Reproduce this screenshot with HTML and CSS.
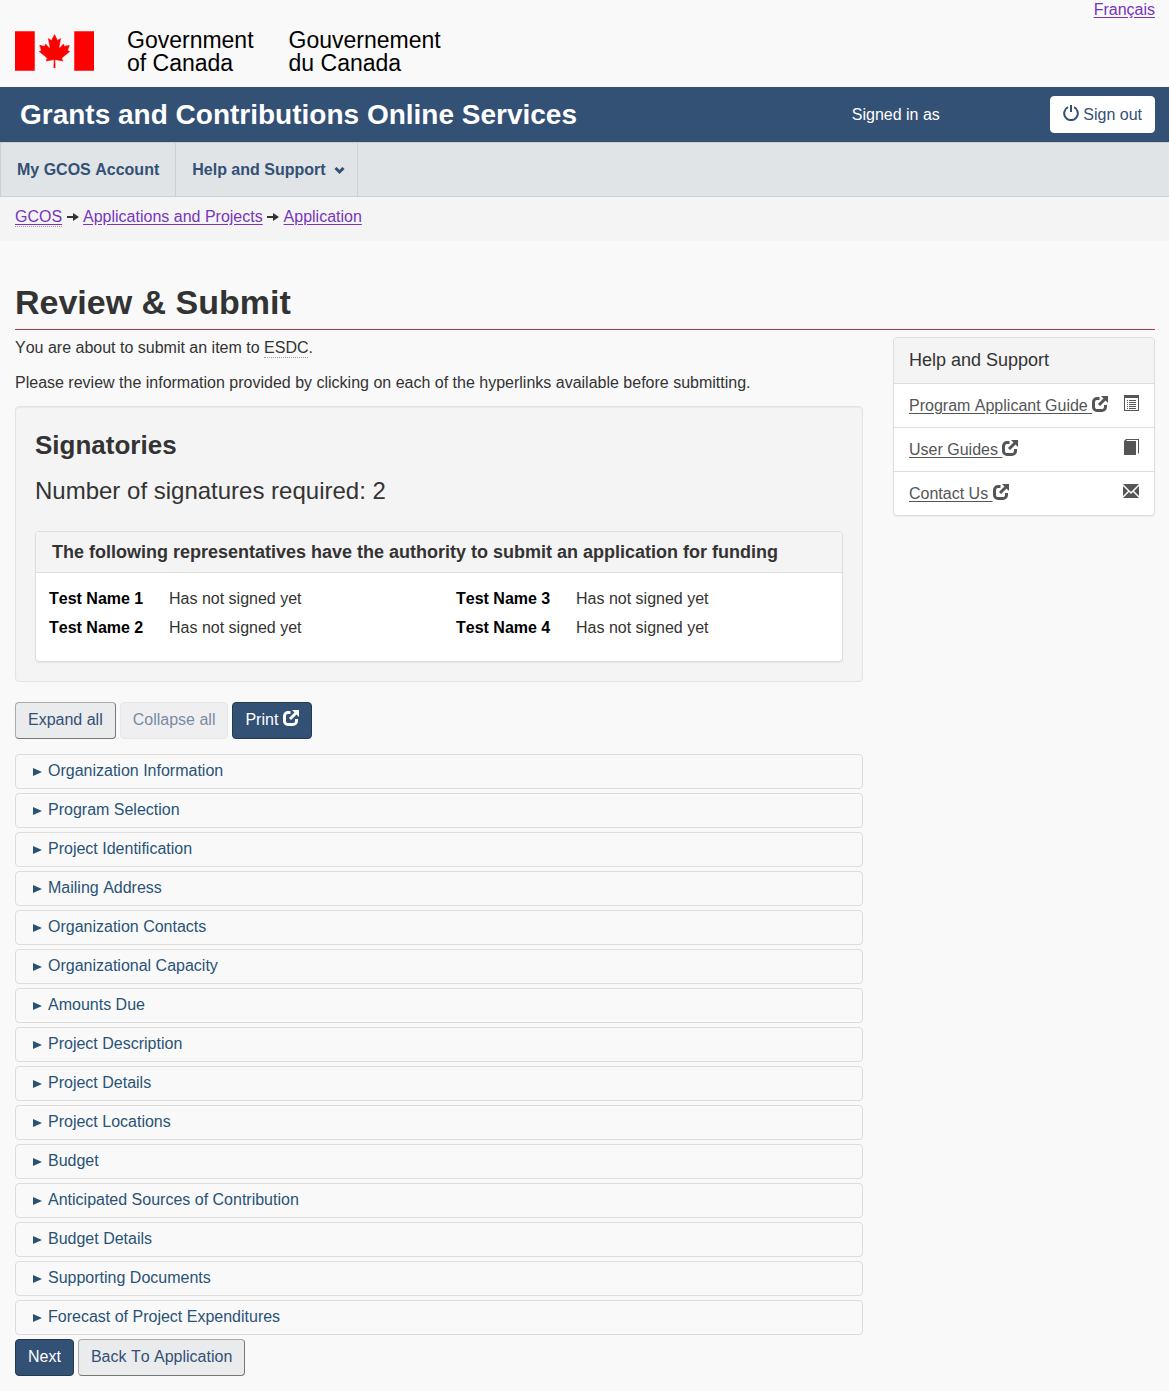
FILE: index.html
```html
<!DOCTYPE html>
<html lang="en">
<head>
    <meta charset="UTF-8">
    <meta name="viewport" content="width=device-width, initial-scale=1.0">
    <title>Review &amp; Submit - Grants and Contributions Online Services</title>
    <link rel="stylesheet" href="styles.css">
</head>
<body>
    <!-- shared icons -->
    <svg class="sprite" aria-hidden="true">
        <symbol id="icon-new-window" viewBox="0 0 16 16">
            <path fill="none" stroke="currentColor" stroke-width="3" d="M7.500 2.500H5A3.500 3.500 0 0 0 1.500 6v5A3.500 3.500 0 0 0 5 14.500h5a3.500 3.500 0 0 0 3.500-3.500V9"/>
            <path d="M9 0h7v7z"/>
            <path fill="none" stroke="currentColor" stroke-width="3" d="M13.500 2.500L7 9"/>
        </symbol>
        <symbol id="icon-arrow" viewBox="0 0 12 10">
            <path d="M0 4h6V1l6 4-6 4V6H0z"/>
        </symbol>
    </svg>

    <header>
        <div class="top-bar">
            <div class="brand">
                <svg class="flag" viewBox="-4800 -2400 9600 4800" role="img" aria-label="Flag of Canada">
                    <path fill="#f00" d="M-4800-2400h2400v4800h-2400zM2400-2400h2400v4800H2400z"/>
                    <path fill="#f00" stroke="#f00" stroke-width="60" d="M-90 2030l45-863a95 95 0 0 0-111-98l-859 151 116-320a65 65 0 0 0-20-73l-941-762 212-99a65 65 0 0 0 34-79l-186-572 542 115a65 65 0 0 0 73-38l105-247 423 454a65 65 0 0 0 111-57l-204-1052 327 189a65 65 0 0 0 91-27l332-652 332 652a65 65 0 0 0 91 27l327-189-204 1052a65 65 0 0 0 111 57l423-454 105 247a65 65 0 0 0 73 38l542-115-186 572a65 65 0 0 0 34 79l212 99-941 762a65 65 0 0 0-20 73l116 320-859-151a95 95 0 0 0-111 98l45 863z"/>
                </svg>
                <span class="brand-en">Government<br>of Canada</span>
                <span class="brand-fr" lang="fr">Gouvernement<br>du Canada</span>
            </div>
            <a href="#" class="lang" lang="fr">Français</a>
        </div>

        <div class="banner">
            <div class="banner-title">Grants and Contributions Online Services</div>
            <span class="signed-in">Signed in as</span>
            <button type="button" class="btn btn-signout">
                <svg class="icon" viewBox="0 0 16 16" aria-hidden="true">
                    <path fill="none" stroke="currentColor" stroke-width="2" d="M5 2.200a6.800 6.800 0 1 0 6 0"/>
                    <path d="M7 0h2v7H7z"/>
                </svg>
                Sign out
            </button>
        </div>

        <nav class="menu">
            <a href="#">My GCOS Account</a>
            <a href="#">Help and Support
                <svg class="chevron" viewBox="0 0 10 8" aria-hidden="true"><path fill="none" stroke="currentColor" stroke-width="3" d="M1 1l4 4 4-4"/></svg>
            </a>
        </nav>

        <nav class="breadcrumb">
            <a href="#"><abbr>GCOS</abbr></a>
            <svg class="arrow" aria-hidden="true"><use href="#icon-arrow"/></svg>
            <a href="#">Applications and Projects</a>
            <svg class="arrow" aria-hidden="true"><use href="#icon-arrow"/></svg>
            <a href="#">Application</a>
        </nav>
    </header>

    <main>
        <h1>Review &amp; Submit</h1>
        <div class="row">
            <div class="content">
                <p>You are about to submit an item to <abbr>ESDC</abbr>.</p>
                <p>Please review the information provided by clicking on each of the hyperlinks available before submitting.</p>

                <section class="well">
                    <h2>Signatories</h2>
                    <p class="required">Number of signatures required: 2</p>
                    <div class="panel">
                        <h3>The following representatives have the authority to submit an application for funding</h3>
                        <table class="signers">
                            <colgroup>
                                <col class="col-name">
                                <col class="col-status">
                                <col class="col-name">
                                <col>
                            </colgroup>
                            <tr>
                                <th>Test Name 1</th>
                                <td>Has not signed yet</td>
                                <th>Test Name 3</th>
                                <td>Has not signed yet</td>
                            </tr>
                            <tr>
                                <th>Test Name 2</th>
                                <td>Has not signed yet</td>
                                <th>Test Name 4</th>
                                <td>Has not signed yet</td>
                            </tr>
                        </table>
                    </div>
                </section>

                <div class="buttons">
                    <button type="button" class="btn">Expand all</button>
                    <button type="button" class="btn" disabled>Collapse all</button>
                    <button type="button" class="btn btn-primary">Print <svg class="icon" aria-hidden="true"><use href="#icon-new-window"/></svg></button>
                </div>

                <div class="sections">
                    <details><summary>Organization Information</summary></details>
                    <details><summary>Program Selection</summary></details>
                    <details><summary>Project Identification</summary></details>
                    <details><summary>Mailing Address</summary></details>
                    <details><summary>Organization Contacts</summary></details>
                    <details><summary>Organizational Capacity</summary></details>
                    <details><summary>Amounts Due</summary></details>
                    <details><summary>Project Description</summary></details>
                    <details><summary>Project Details</summary></details>
                    <details><summary>Project Locations</summary></details>
                    <details><summary>Budget</summary></details>
                    <details><summary>Anticipated Sources of Contribution</summary></details>
                    <details><summary>Budget Details</summary></details>
                    <details><summary>Supporting Documents</summary></details>
                    <details><summary>Forecast of Project Expenditures</summary></details>
                </div>

                <div class="buttons">
                    <button type="button" class="btn btn-primary">Next</button>
                    <button type="button" class="btn">Back To Application</button>
                </div>
            </div>

            <aside class="help">
                <h2>Help and Support</h2>
                <ul>
                    <li>
                        <a href="#">Program Applicant Guide <svg class="icon" aria-hidden="true"><use href="#icon-new-window"/></svg></a>
                        <svg class="icon" viewBox="0 0 16 16" aria-hidden="true">
                            <path fill-rule="evenodd" d="M1 0h15v16H1zM2 3v12h13V3z"/>
                            <path d="M4 5h1v1H4zM6 5h7v1H6zM4 7h1v1H4zM6 7h7v1H6zM4 9h1v1H4zM6 9h7v1H6zM4 11h1v1H4zM6 11h7v1H6zM4 13h1v1H4zM6 13h7v1H6z"/>
                        </svg>
                    </li>
                    <li>
                        <a href="#">User Guides <svg class="icon" aria-hidden="true"><use href="#icon-new-window"/></svg></a>
                        <svg class="icon" viewBox="0 0 16 16" aria-hidden="true">
                            <path d="M1 2l2-2h13v14l-1 1V1H4L3 2h10v14H1z"/>
                        </svg>
                    </li>
                    <li>
                        <a href="#">Contact Us <svg class="icon" aria-hidden="true"><use href="#icon-new-window"/></svg></a>
                        <svg class="icon" viewBox="0 0 16 16" aria-hidden="true">
                            <path d="M0 1h16L8 9zM0 3l5 5-5 5zM16 3v10l-5-5zM0 15l6-6 2 2 2-2 6 6z"/>
                        </svg>
                    </li>
                </ul>
            </aside>
        </div>
    </main>
</body>
</html>
```
FILE: styles.css
```css
* {
    box-sizing: border-box;
}

body {
    font-family: "Liberation Sans", Arial, sans-serif;
    font-size: 16px;
    font-kerning: none;
    line-height: 23px;
    color: #333;
    background-color: #f9f9f9;
    margin: 0;
}

a {
    color: #7834bc;
    text-underline-offset: 2px;
}

abbr {
    padding-bottom: 1px;
    border-bottom: 1px dotted #999;
}

p {
    margin: 0 0 12px;
}

.sprite {
    position: absolute;
    width: 0;
    height: 0;
}

.icon {
    width: 16px;
    height: 16px;
    fill: currentColor;
    vertical-align: -1px;
}

/* Header */
.top-bar {
    display: flex;
    justify-content: space-between;
    align-items: flex-start;
    height: 87px;
    padding: 0 14px 0 15px;
}

.brand {
    display: flex;
    padding-top: 29px;
    color: #000;
    font-size: 23px;
}

.flag {
    width: 79px;
    height: 40px;
    margin: 2px 33px 0 0;
}

.brand-en {
    margin-right: 35px;
}

.lang {
    line-height: 20px;
}

.banner {
    display: flex;
    align-items: center;
    height: 55px;
    padding: 0 14px 0 20px;
    background-color: #335075;
    color: #fff;
}

.banner-title {
    flex: 1;
    font-size: 28px;
    font-weight: bold;
}

.signed-in {
    margin-right: 110px;
}

.menu {
    display: flex;
    height: 55px;
    background-color: #e0e4e7;
    border: 1px solid #ccd0d4;
    border-right: 0;
}

.menu a {
    padding: 15px 16px;
    border-right: 1px solid #ccd0d4;
    color: #335075;
    font-weight: bold;
    text-decoration: none;
}

.menu a:last-child {
    padding-right: 12px;
}

.chevron {
    width: 11px;
    height: 8px;
    margin-left: 4px;
}

.breadcrumb {
    height: 44px;
    padding: 8px 15px;
    background-color: #f4f4f4;
}

.arrow {
    width: 12px;
    height: 10px;
    fill: #333;
}

/* Buttons */
.btn {
    height: 37px;
    padding: 0 12px 2px;
    background-color: #eaebed;
    color: #335075;
    border: 1px solid #aaa;
    border-right-color: #777;
    border-bottom-color: #777;
    border-radius: 4px;
    font-family: inherit;
    font-size: 16px;
    font-kerning: none;
    line-height: 23px;
    cursor: pointer;
}

.btn:disabled {
    border-color: #dcdee1;
    opacity: 0.65;
    cursor: default;
}

.btn-primary {
    background-color: #335075;
    color: #fff;
    border-color: #243850;
}

.btn-signout {
    padding-bottom: 0;
    background-color: #fff;
    border-color: #fff;
}

.buttons {
    display: flex;
    gap: 4px;
}

/* Page */
main {
    padding: 0 14px 15px 15px;
}

h1 {
    margin: 41px 0 6px;
    padding-bottom: 6px;
    font-size: 34px;
    line-height: 41px;
    border-bottom: 1px solid #af3c43;
}

.row {
    display: grid;
    grid-template-columns: minmax(0, 1fr) 262px;
    gap: 30px;
    align-items: start;
}

.well {
    margin-bottom: 20px;
    padding: 19px;
    background-color: #f4f4f4;
    border: 1px solid #e3e3e3;
    border-radius: 4px;
    box-shadow: inset 0 1px 1px rgba(0, 0, 0, 0.05);
}

.well h2 {
    margin: 4px 0 16px;
    font-size: 26px;
    line-height: 30px;
}

.required {
    margin-bottom: 25px;
    font-size: 24px;
    line-height: 30px;
}

.panel {
    background-color: #fff;
    border: 1px solid #ddd;
    border-radius: 4px;
    box-shadow: 0 1px 1px rgba(0, 0, 0, 0.05);
}

.panel h3 {
    margin: 0;
    padding: 9px 16px 8px;
    font-size: 18px;
    background-color: #f4f4f4;
    border-bottom: 1px solid #ddd;
    border-radius: 3px 3px 0 0;
}

.signers {
    width: 100%;
    margin: 11px 0 19px;
    padding-left: 13px;
    border-spacing: 0;
    table-layout: fixed;
}

.signers th,
.signers td {
    height: 29px;
    padding: 0;
    text-align: left;
}

.signers th {
    color: #000;
}

.col-name {
    width: 120px;
}

.col-status {
    width: 287px;
}

.sections {
    margin-top: 15px;
}

details {
    margin-bottom: 4px;
    border: 1px solid #ddd;
    border-radius: 4px;
}

summary {
    display: flex;
    align-items: center;
    padding: 4px 16px 6px;
    color: #295376;
    cursor: pointer;
}

summary::before {
    content: "";
    margin: 2px 6px 0 1px;
    border: 4px solid transparent;
    border-left: 9px solid #295376;
    border-right: 0;
}

/* Help panel */
.help {
    margin-top: 1px;
    background-color: #fff;
    border: 1px solid #ddd;
    border-radius: 4px;
    box-shadow: 0 1px 1px rgba(0, 0, 0, 0.05);
}

.help h2 {
    margin: 0;
    padding: 11px 15px;
    font-size: 18px;
    font-weight: normal;
    background-color: #f4f4f4;
    border-radius: 3px 3px 0 0;
}

.help ul {
    margin: 0;
    padding: 0;
    list-style: none;
}

.help li {
    display: flex;
    justify-content: space-between;
    padding: 10px 15px;
    border-top: 1px solid #ddd;
    color: #555;
}

.help li > .icon {
    margin-top: 1px;
}

.help a {
    color: #555;
}
```
